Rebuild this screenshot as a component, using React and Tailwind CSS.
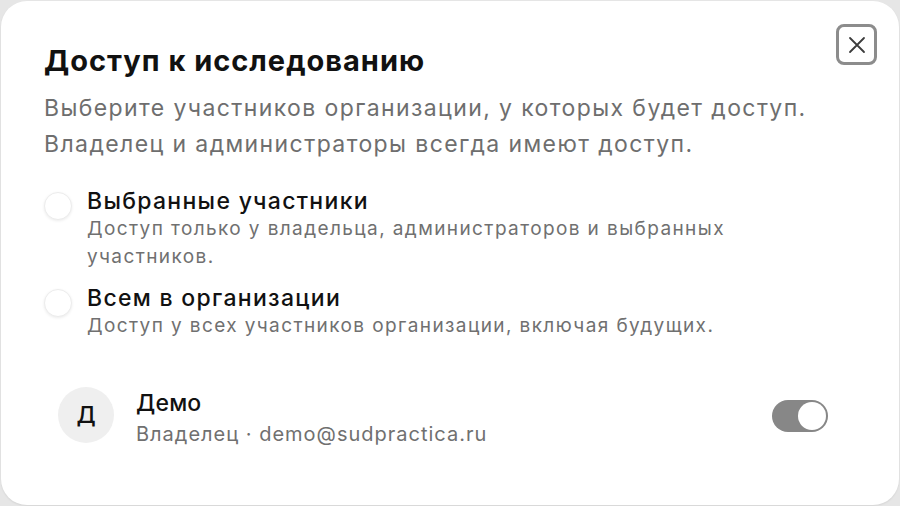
import React, { useState } from "react";

function Radio({ checked, onClick }) {
  return (
    <button
      type="button"
      onClick={onClick}
      className="mt-[5px] w-[28px] h-[28px] shrink-0 rounded-full bg-white border border-[#ececec] shadow-[0_1px_3px_rgba(0,0,0,0.08)] flex items-center justify-center"
    >
      {checked && <span className="w-[12px] h-[12px] rounded-full bg-[#333]" />}
    </button>
  );
}

export default function App() {
  const [mode, setMode] = useState(null);
  const [on, setOn] = useState(true);

  return (
    <div
      className="w-[900px] h-[506px] bg-[#e6e6e6] p-px"
      style={{ fontFamily: "Inter, 'Noto Sans', sans-serif" }}
    >
      <div className="relative w-full h-full bg-white rounded-[26px] shadow-[0_1px_2px_rgba(0,0,0,0.08)] pl-[43px] pr-[71px] pt-[40px]">
        <button
          type="button"
          className="absolute top-[23px] right-[22px] w-[41px] h-[41px] rounded-[8px] border-[3px] border-[#8c8c8c] flex items-center justify-center text-[#3c3c3c]"
        >
          <svg width="24" height="24" viewBox="0 0 24 24" fill="none" stroke="currentColor" strokeWidth="1.8" strokeLinecap="round">
            <path d="M5 5L19 19M19 5L5 19" />
          </svg>
        </button>

        <h1 className="text-[29px] leading-[40px] font-bold text-[#111] tracking-[1px]">
          Доступ к исследованию
        </h1>
        <p className="mt-[9px] text-[23px] leading-[36px] text-[#6e6e6e] tracking-[1.4px]">
          Выберите участников организации, у которых будет доступ.
          <br />
          Владелец и администраторы всегда имеют доступ.
        </p>

        <div className="mt-[25px] flex flex-col gap-[13px]">
          <div className="flex gap-[15px]">
            <Radio checked={mode === "selected"} onClick={() => setMode("selected")} />
            <div>
              <div className="text-[23px] leading-[28px] font-medium text-[#111] tracking-[1.3px]">
                Выбранные участники
              </div>
              <div className="text-[19px] leading-[28px] text-[#707070] tracking-[1.4px] w-[660px]">
                Доступ только у владельца, администраторов и выбранных участников.
              </div>
            </div>
          </div>
          <div className="flex gap-[15px]">
            <Radio checked={mode === "all"} onClick={() => setMode("all")} />
            <div>
              <div className="text-[23px] leading-[28px] font-medium text-[#111] tracking-[1.3px]">
                Всем в организации
              </div>
              <div className="text-[19px] leading-[28px] text-[#707070] tracking-[1.4px]">
                Доступ у всех участников организации, включая будущих.
              </div>
            </div>
          </div>
        </div>

        <div className="mt-[47px] flex items-start pl-[14px]">
          <div className="w-[56px] h-[56px] shrink-0 rounded-full bg-[#efefef] flex items-center justify-center text-[23px] font-medium text-[#111]">
            Д
          </div>
          <div className="ml-[22px] mt-[2px] flex-1">
            <div className="text-[23px] leading-[28px] font-medium text-[#111] tracking-[0.2px]">Демо</div>
            <div className="mt-[3px] text-[20px] leading-[28px] text-[#707070] tracking-[1px]">
              Владелец · demo@sudpractica.ru
            </div>
          </div>
          <button
            type="button"
            onClick={() => setOn(!on)}
            className={`mt-[13px] w-[56px] h-[32px] rounded-full p-[2px] flex items-center ${on ? "bg-[#878787] justify-end" : "bg-[#d5d5d5] justify-start"}`}
          >
            <span className="w-[28px] h-[28px] rounded-full bg-white" />
          </button>
        </div>
      </div>
    </div>
  );
}
